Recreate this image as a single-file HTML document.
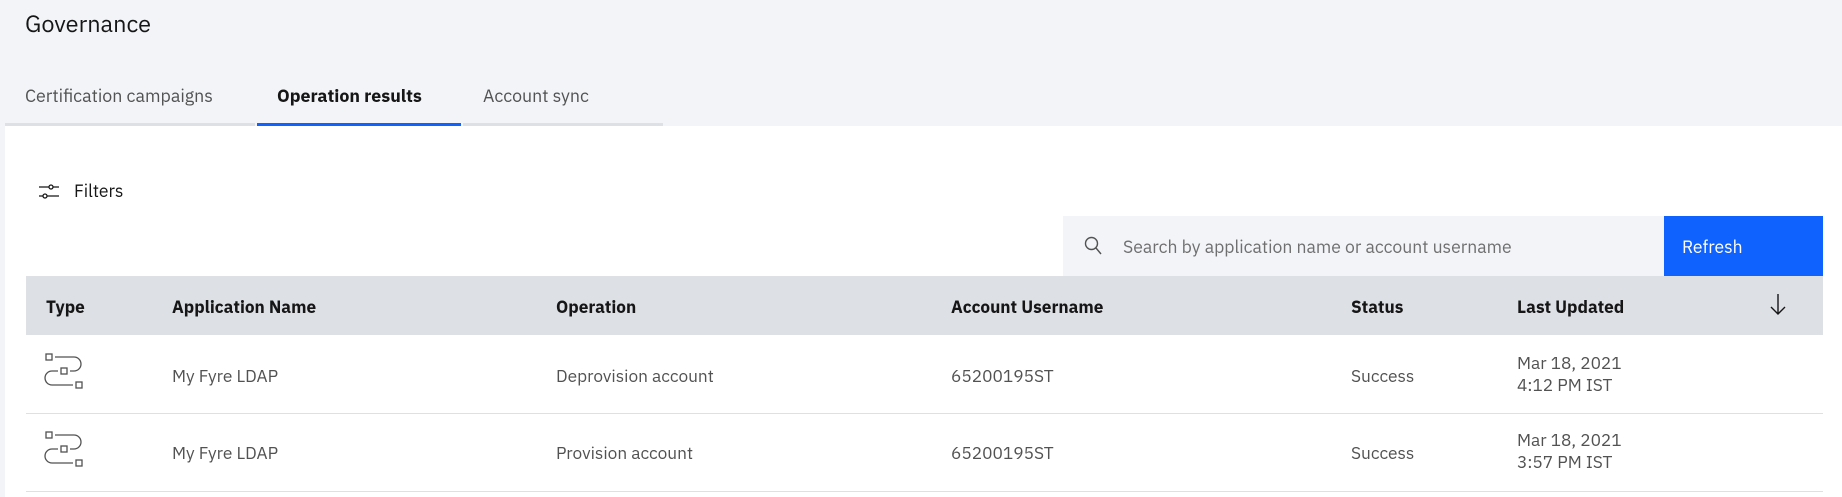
<!DOCTYPE html>
<html><head><meta charset="utf-8"><style>
*{box-sizing:border-box;margin:0;padding:0}
body{width:1842px;height:497px;background:#f2f4f8;font-family:"IBM Plex Sans","Liberation Sans",sans-serif;color:#161616;position:relative;overflow:hidden}
.abs{position:absolute}
h1{position:absolute;left:25px;top:9px;font-size:23.5px;font-weight:400}
.tab{position:absolute;top:84px;height:42px;font-size:17.8px;color:#525252;border-bottom:3px solid #dde1e6;padding-top:0}
.tab span{position:absolute;top:0;left:0;width:100%;}
.main{position:absolute;left:5px;top:126px;right:0;bottom:0;background:#fff}
.th{position:absolute;top:276px;left:26px;width:1797px;height:59px;background:#dde1e6}
.h{position:absolute;font-size:17.2px;font-weight:700;top:295px}
.c{position:absolute;font-size:17.3px;color:#525252}
.line{position:absolute;left:26px;width:1797px;height:1px;background:#e0e0e0}
</style></head><body>
<h1>Governance</h1>
<div class="tab" style="left:5px;width:250px"><span style="left:20px">Certification campaigns</span></div>
<div class="tab" style="left:257px;width:204px;border-color:#0f62fe;color:#161616;font-weight:700"><span style="left:20px">Operation results</span></div>
<div class="tab" style="left:463px;width:200px"><span style="left:20px">Account sync</span></div>
<div class="main"></div>
<svg class="abs" style="left:38px;top:181px" width="22" height="22" viewBox="0 0 22 22" fill="none" stroke="#161616" stroke-width="1.3"><path d="M1 6h10M15 6h6M1 15h4M9 15h12"/><circle cx="13" cy="6" r="2"/><circle cx="7" cy="15" r="2"/></svg>
<div class="abs" style="left:74px;top:179px;font-size:17.5px">Filters</div>
<div class="abs" style="left:1063px;top:216px;width:601px;height:60px;background:#f2f4f8"></div>
<svg class="abs" style="left:1084px;top:236px" width="18" height="20" viewBox="0 0 18 20" fill="none" stroke="#525252" stroke-width="1.4"><circle cx="7.5" cy="7.5" r="6"/><path d="M12 12l5 6"/></svg>
<div class="abs" style="left:1123px;top:235px;font-size:17.6px;color:#6f6f6f">Search by application name or account username</div>
<div class="abs" style="left:1664px;top:216px;width:159px;height:60px;background:#0f62fe;color:#fff;font-size:17.5px;padding:19px 0 0 18px">Refresh</div>
<div class="th"></div>
<div class="h" style="left:46px">Type</div>
<div class="h" style="left:172px">Application Name</div>
<div class="h" style="left:556px">Operation</div>
<div class="h" style="left:951px">Account Username</div>
<div class="h" style="left:1351px">Status</div>
<div class="h" style="left:1517px">Last Updated</div>
<svg class="abs" style="left:1770px;top:292px" width="16" height="24" viewBox="0 0 16 24" fill="none" stroke="#161616" stroke-width="1.4"><path d="M8 2v20M1 15l7 7 7-7"/></svg>
<div class="line" style="top:413px"></div>
<div class="line" style="top:491px"></div>
<svg class="abs" style="left:44px;top:352px" width="42" height="42" viewBox="0 0 42 42" fill="none" stroke="#525252" stroke-width="1.3"><rect x="2" y="2" width="6" height="6"/><rect x="17" y="16" width="6" height="6"/><rect x="32" y="30" width="6" height="6"/><path d="M11 5h19a6 6 0 0 1 0 14h-4M14 19h-6a6 6 0 0 0 0 14h21"/></svg>
<svg class="abs" style="left:44px;top:430px" width="42" height="42" viewBox="0 0 42 42" fill="none" stroke="#525252" stroke-width="1.3"><rect x="2" y="2" width="6" height="6"/><rect x="17" y="16" width="6" height="6"/><rect x="32" y="30" width="6" height="6"/><path d="M11 5h19a6 6 0 0 1 0 14h-4M14 19h-6a6 6 0 0 0 0 14h21"/></svg>
<div class="c" style="left:172px;top:364px">My Fyre LDAP</div>
<div class="c" style="left:556px;top:364px">Deprovision account</div>
<div class="c" style="left:951px;top:364px">65200195ST</div>
<div class="c" style="left:1351px;top:364px">Success</div>
<div class="c" style="left:1517px;top:352px;line-height:22px">Mar 18, 2021<br>4:12 PM IST</div>
<div class="c" style="left:172px;top:441px">My Fyre LDAP</div>
<div class="c" style="left:556px;top:441px">Provision account</div>
<div class="c" style="left:951px;top:441px">65200195ST</div>
<div class="c" style="left:1351px;top:441px">Success</div>
<div class="c" style="left:1517px;top:429px;line-height:22px">Mar 18, 2021<br>3:57 PM IST</div>
</body></html>
